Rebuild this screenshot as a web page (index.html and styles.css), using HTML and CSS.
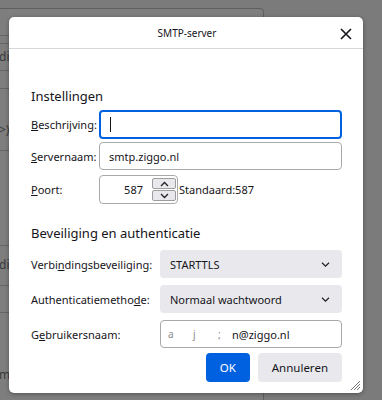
FILE: index.html
```html
<!DOCTYPE html>
<html lang="nl">
<head>
    <meta charset="UTF-8">
    <title>SMTP-server</title>
    <link rel="stylesheet" href="styles.css">
</head>
<body>

    <!-- Venster op de achtergrond (gedimd) -->
    <div class="backdrop">
        <div class="bg-window"></div>
        <div class="bg-line" style="top:35px"></div>
        <div class="bg-line" style="top:43px"></div>
        <div class="bg-text" style="top:48px">di</div>
        <div class="bg-line" style="top:70px"></div>
        <div class="bg-line" style="top:88px"></div>
        <div class="bg-text" style="top:121px">&gt;)</div>
        <div class="bg-line" style="top:150px"></div>
        <div class="bg-line" style="top:245px"></div>
        <div class="bg-text" style="top:256px">di</div>
        <div class="bg-line" style="top:285px"></div>
        <div class="bg-line" style="top:312px"></div>
        <div class="bg-text" style="top:366px">m</div>
    </div>

    <!-- Dialoog -->
    <div class="dialog">
        <div class="dialog-header">
            <span class="dialog-title">SMTP-server</span>
            <svg class="close" width="12" height="12" viewBox="0 0 12 12">
                <path d="M1 1 L11 11 M11 1 L1 11" stroke="#15141a" stroke-width="1.6" fill="none"/>
            </svg>
        </div>

        <div class="dialog-body">
            <div class="section-title first">Instellingen</div>

            <div class="row">
                <label class="label"><u>B</u>eschrijving:</label>
                <div class="input focused"><span class="caret"></span></div>
            </div>

            <div class="row">
                <label class="label"><u>S</u>ervernaam:</label>
                <div class="input">smtp.ziggo.nl</div>
            </div>

            <div class="row port-row">
                <label class="label"><u>P</u>oort:</label>
                <div class="number">
                    <span class="number-value">587</span>
                    <div class="spinner">
                        <div class="spin-btn">
                            <svg width="9" height="6" viewBox="0 0 9 6"><path d="M1 5 L4.5 1.5 L8 5" stroke="#222" stroke-width="1.3" fill="none"/></svg>
                        </div>
                        <div class="spin-btn">
                            <svg width="9" height="6" viewBox="0 0 9 6"><path d="M1 1 L4.5 4.5 L8 1" stroke="#222" stroke-width="1.3" fill="none"/></svg>
                        </div>
                    </div>
                </div>
                <span class="default-port">Standaard:587</span>
            </div>

            <div class="section-title">Beveiliging en authenticatie</div>

            <div class="row wide">
                <label class="label">Verbi<u>n</u>dingsbeveiliging:</label>
                <div class="select">
                    <span>STARTTLS</span>
                    <svg width="9" height="5" viewBox="0 0 9 5"><path d="M1 0.8 L4.5 4.2 L8 0.8" stroke="#222" stroke-width="1.2" fill="none"/></svg>
                </div>
            </div>

            <div class="row wide">
                <label class="label">Authenticatiemetho<u>d</u>e:</label>
                <div class="select">
                    <span>Normaal wachtwoord</span>
                    <svg width="9" height="5" viewBox="0 0 9 5"><path d="M1 0.8 L4.5 4.2 L8 0.8" stroke="#222" stroke-width="1.2" fill="none"/></svg>
                </div>
            </div>

            <div class="row wide">
                <label class="label">G<u>e</u>bruikersnaam:</label>
                <div class="input user">
                    <span class="blur">a</span>
                    <span class="blur">j</span>
                    <span class="blur">;</span>
                    <span class="user-end">n@ziggo.nl</span>
                </div>
            </div>

            <div class="buttons">
                <button class="btn primary">OK</button>
                <button class="btn">Annuleren</button>
            </div>
        </div>

        <svg class="grip" width="11" height="11" viewBox="0 0 11 11">
            <path d="M10 1 L1 10 M10 4 L4 10 M10 7 L7 10" stroke="#777" stroke-width="1" fill="none"/>
        </svg>
    </div>

</body>
</html>
```

FILE: styles.css
```css
* {
    box-sizing: border-box;
    margin: 0;
    padding: 0;
}

body {
    width: 382px;
    height: 400px;
    overflow: hidden;
    background-color: #7b7b7b;
    font-family: "Noto Sans", "Open Sans", sans-serif;
    font-size: 11px;
    color: #15141a;
    position: relative;
}

/* Achtergrond */
.backdrop {
    position: absolute;
    inset: 0;
    overflow: hidden;
}

.bg-window {
    position: absolute;
    left: -10px;
    top: 8px;
    width: 274px;
    height: 400px;
    border: 1px solid #5f5f5f;
    border-radius: 4px;
    background-color: #7e7e7e;
}

.bg-line {
    position: absolute;
    left: 0;
    width: 20px;
    height: 1px;
    background-color: #666;
}

.bg-text {
    position: absolute;
    left: -1px;
    font-size: 12px;
    color: #3a3a3a;
}

/* Dialoog */
.dialog {
    position: absolute;
    left: 9px;
    top: 17px;
    width: 354px;
    height: 376px;
    background-color: #fff;
    border-radius: 5px;
    box-shadow: 0 1px 4px rgba(0, 0, 0, 0.35);
}

.dialog-header {
    height: 32px;
    border-bottom: 1px solid #d8d8d8;
    display: flex;
    align-items: center;
    justify-content: center;
    position: relative;
}

.dialog-title {
    font-size: 10px;
    padding-left: 2px;
}

.close {
    position: absolute;
    right: 11px;
    top: 11px;
}

.dialog-body {
    padding: 0 21px 0 22px;
}

.section-title {
    font-size: 13px;
    line-height: 20px;
    margin: 19px 0 4px;
}

.section-title.first {
    margin-top: 37px;
}

.row {
    display: flex;
    align-items: center;
    margin-top: 3px;
}

.row.wide {
    margin-top: 7px;
}

.row .label {
    width: 68px;
    flex-shrink: 0;
    white-space: nowrap;
}

.row.wide .label {
    width: 129px;
}

.row.port-row {
    margin-top: 5px;
}

.input {
    flex: 1;
    height: 28px;
    border: 1px solid #a9a9a9;
    border-radius: 4px;
    padding: 0 9px;
    display: flex;
    align-items: center;
    background-color: #fff;
}

.input.focused {
    height: 29px;
    border: 2px solid #0061e0;
    padding-left: 9px;
}

.caret {
    width: 1px;
    height: 15px;
    background-color: #15141a;
}

.number {
    width: 79px;
    height: 29px;
    border: 1px solid #a9a9a9;
    border-radius: 4px;
    display: flex;
    align-items: stretch;
}

.number-value {
    flex: 1;
    text-align: right;
    padding-right: 9px;
    align-self: center;
}

.spinner {
    width: 24px;
    margin: 2px 1px 2px 0;
    display: flex;
    flex-direction: column;
    gap: 1px;
}

.spin-btn {
    flex: 1;
    background-color: #e9e9ed;
    border: 1px solid #9d9d9d;
    border-radius: 2px;
    display: flex;
    align-items: center;
    justify-content: center;
}

.default-port {
    margin-left: 1px;
}

.select {
    flex: 1;
    height: 28px;
    border-radius: 4px;
    background-color: #e9e9ed;
    display: flex;
    align-items: center;
    justify-content: space-between;
    padding: 0 12px 0 10px;
}

.input.user {
    padding-left: 7px;
}

.blur {
    color: #8a8a8a;
    font-size: 10px;
    width: 25px;
}

.blur:nth-child(3) {
    width: 14px;
}

.buttons {
    display: flex;
    justify-content: flex-end;
    gap: 8px;
    margin-top: 5px;
}

.btn {
    height: 29px;
    border: none;
    border-radius: 4px;
    font-family: inherit;
    font-size: 11.5px;
    background-color: #e9e9ed;
    color: #15141a;
    padding: 0 14px;
}

.btn.primary {
    width: 44px;
    padding: 0;
    background-color: #0061e0;
    color: #fff;
}

.grip {
    position: absolute;
    right: 2px;
    bottom: 2px;
}
```
